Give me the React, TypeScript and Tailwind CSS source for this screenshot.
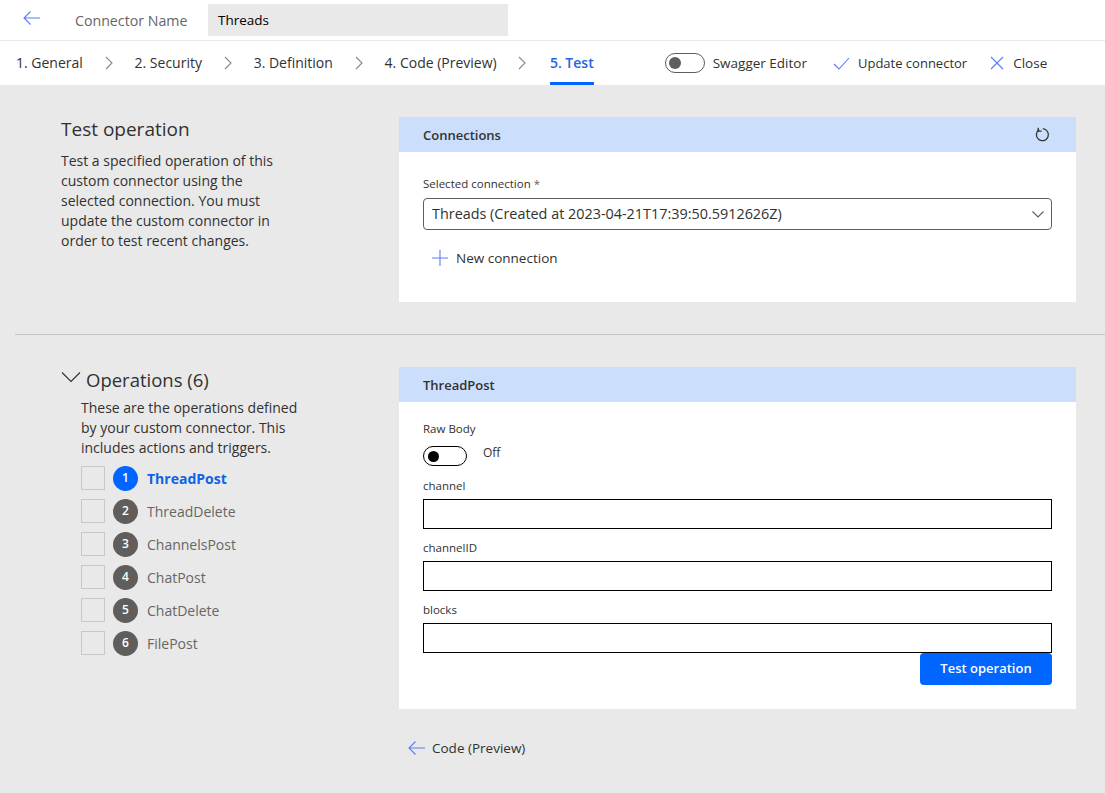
import React from 'react';

const steps = ['1. General', '2. Security', '3. Definition', '4. Code (Preview)'];
const operations = ['ThreadPost', 'ThreadDelete', 'ChannelsPost', 'ChatPost', 'ChatDelete', 'FilePost'];
const fields = ['channel', 'channelID', 'blocks'];

const Glyph = ({ w, h, d, className }: { w: number; h: number; d: string; className?: string }) => (
  <svg width={w} height={h} viewBox={`0 0 ${w} ${h}`} fill="none" stroke="currentColor" strokeWidth="1.1" className={`shrink-0 ${className ?? ''}`}>
    <path d={d} />
  </svg>
);

const BackArrow = ({ className }: { className?: string }) => (
  <Glyph w={17} h={14} d="M7.5 .5 1 7l6.5 6.5M1 7h16" className={className} />
);

const CardHeader = ({ title, children }: { title: string; children?: React.ReactNode }) => (
  <div className="h-[35px] bg-[#cbdffd] pl-6 pr-[26px] flex items-center justify-between text-[13px] font-semibold text-[#323130]">
    <span className="pt-[2px]">{title}</span>
    {children}
  </div>
);

export default function App() {
  return (
    <div className="h-[793px] w-[1105px] overflow-hidden flex flex-col bg-[#e9e9e9] text-[13.5px] text-[#323130] font-['Open_Sans',sans-serif]">
      {/* Name bar */}
      <div className="h-[41px] shrink-0 bg-white border-b border-[#e9e9e9] flex items-start">
        <BackArrow className="ml-[23px] mt-[11px] w-[17px] text-[#5b7cf5]" />
        <span className="ml-[35px] mt-[10px] w-[133px] text-[14.2px] text-[#666666]">Connector Name</span>
        <div className="mt-[4px] h-[32px] w-[300px] bg-[#e9e9e9] pl-[10px] flex items-center text-black">Threads</div>
      </div>

      {/* Steps */}
      <div className="h-[44px] shrink-0 bg-white flex items-center pl-4">
        {steps.map((step) => (
          <React.Fragment key={step}>
            <span className="w-fit text-[14px] -mt-[1px]">{step}</span>
            <Glyph w={8} h={14} d="M1 1l6 6-6 6" className="ml-[21.7px] mr-[22px] text-[#8a8886]" />
          </React.Fragment>
        ))}
        <span className="ml-[1.5px] h-full flex items-center border-b-[3px] border-[#0066ff] text-[14px] text-[#2266e3] font-semibold pt-[2px]">5. Test</span>
        <div className="ml-[71px] h-5 w-10 rounded-full border border-[#605e5c] flex items-center pl-[3px]">
          <span className="h-3 w-3 rounded-full bg-[#605e5c]" />
        </div>
        <span className="ml-2">Swagger Editor</span>
        <Glyph w={17} h={13} d="M1 7l5 5L16 1" className="ml-[26px] text-[#5b7cf5]" />
        <span className="ml-[8px] pt-[1px] text-[13px]">Update connector</span>
        <Glyph w={14} h={14} d="M1 1l12 12M13 1 1 13" className="ml-[23px] text-[#5b7cf5]" />
        <span className="ml-[9px]">Close</span>
      </div>

      {/* Connections section */}
      <div className="pt-8 pb-8 border-b border-[#c4c4c4] ml-[15px] flex">
        <div className="ml-[46px] w-[338px]">
          <h2 className="text-[19px] leading-6">Test operation</h2>
          <p className="mt-[10px] w-[225px] text-[14px] leading-5">
            Test a specified operation of this custom connector using the selected connection. You must update the custom connector in order to test recent changes.
          </p>
        </div>
        <div className="w-[677px] bg-white h-[185px]">
          <CardHeader title="Connections">
            <svg width="16" height="16" viewBox="0 0 16 16" fill="none" stroke="currentColor" strokeWidth="1.3" className="shrink-0">
              <path d="M5.2 2.6a6 6 0 1 0 3.6-.9" />
              <path d="M4.2 .8v3.4h3.4" />
            </svg>
          </CardHeader>
          <div className="px-6 pt-[24px]">
            <div className="text-[11.5px] leading-4">Selected connection <span className="text-[#7a5a58]">*</span></div>
            <div className="mt-[6px] h-8 border border-[#605e5c] rounded-sm pl-[8px] pr-[7px] flex items-center justify-between">
              <span className="text-[14.4px]">Threads (Created at 2023-04-21T17:39:50.5912626Z)</span>
              <Glyph w={12} h={7} d="M.5 .5l5.5 5.5 5.5-5.5" className="text-[#605e5c]" />
            </div>
            <div className="mt-[18px] ml-[9px] flex items-center gap-[8px]">
              <Glyph w={16} h={16} d="M8 0v16M0 8h16" className="text-[#5b7cf5]" />
              <span>New connection</span>
            </div>
          </div>
        </div>
      </div>

      {/* Operations section */}
      <div className="pt-8 ml-[61px] flex">
        <div className="w-[338px]">
          <div className="flex items-center h-6 mt-[1px]">
            <Glyph w={20} h={11} d="M1 .5l9 9 9-9" className="-mt-[5px]" />
            <span className="ml-[5px] text-[18.5px]">Operations (6)</span>
          </div>
          <p className="mt-[6px] ml-5 w-[225px] text-[14px] leading-5">
            These are the operations defined by your custom connector. This includes actions and triggers.
          </p>
          <ul className="mt-[8px] ml-5 flex flex-col gap-[9px]">
            {operations.map((name, i) => (
              <li key={name} className="h-6 flex items-center">
                <span className="h-6 w-6 border border-[#c8c8c8]" />
                <span className={`ml-2 h-[25px] w-[25px] rounded-full flex items-center justify-center text-white text-[12px] font-semibold ${i === 0 ? 'bg-[#0066ff]' : 'bg-[#605e5c]'}`}>{i + 1}</span>
                <span className={`ml-[9px] text-[14px] ${i === 0 ? 'font-bold text-[#0f62e6]' : 'text-[#666666]'}`}>{name}</span>
              </li>
            ))}
          </ul>
        </div>
        <div>
          <div className="w-[677px] h-[342px] bg-white">
            <CardHeader title="ThreadPost" />
            <div className="px-6 pt-[19px]">
              <div className="text-[11.5px] leading-4">Raw Body</div>
              <div className="mt-[9px] flex items-start">
                <div className="h-5 w-11 rounded-full border border-black flex items-center pl-[4px]">
                  <span className="h-[11px] w-[11px] rounded-full bg-black" />
                </div>
                <span className="ml-4 -mt-[1px] text-[12px] leading-4">Off</span>
              </div>
              {fields.map((field, i) => (
                <div key={field} className={i === 0 ? 'mt-[12px]' : 'mt-[11px]'}>
                  <div className="text-[11.5px] leading-4">{field}</div>
                  <div className="mt-[5px] h-[30px] border border-black" />
                </div>
              ))}
              <div className="flex justify-end">
                <button className="h-8 w-[132px] bg-[#0066ff] rounded-sm text-white font-semibold text-[13px]">Test operation</button>
              </div>
            </div>
          </div>
          <div className="mt-[29px] ml-[9px] flex items-center gap-[7px]">
            <BackArrow className="text-[#5b7cf5]" />
            <span>Code (Preview)</span>
          </div>
        </div>
      </div>
    </div>
  );
}
